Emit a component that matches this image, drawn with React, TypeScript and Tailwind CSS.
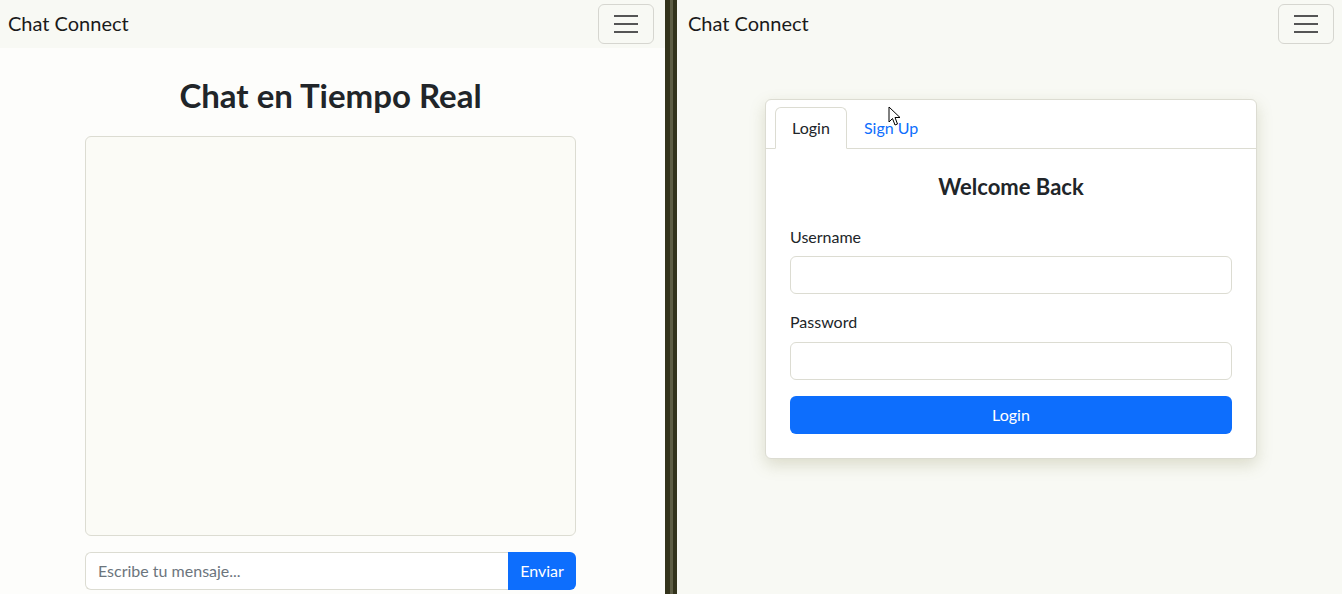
import { useState } from "react";

function Hamburger() {
  return (
    <button className="w-[56px] h-[40px] border border-[#d6d6d0] rounded-md flex flex-col items-center justify-center gap-[6px]">
      <span className="block w-[24px] h-[2px] bg-[#555]"></span>
      <span className="block w-[24px] h-[2px] bg-[#555]"></span>
      <span className="block w-[24px] h-[2px] bg-[#555]"></span>
    </button>
  );
}

function Navbar({ className }: { className: string }) {
  return (
    <nav className={`h-[48px] flex items-center justify-between bg-[#f8f9f4] ${className}`}>
      <span className="text-[20px] text-[#1a1a1a] leading-none -mt-[3px]">Chat Connect</span>
      <Hamburger />
    </nav>
  );
}

function ChatPane() {
  const [message, setMessage] = useState("");

  return (
    <div className="w-[665px] h-[594px] bg-[#fdfdfb] flex flex-col">
      <Navbar className="pl-[8px] pr-[11px]" />
      <div className="w-[491px] ml-[85px] flex flex-col">
        <h2 className="text-[33px] font-bold text-[#212529] text-center leading-[38px] mt-[28px] mb-[22px]">
          Chat en Tiempo Real
        </h2>
        <div className="h-[400px] border border-[#dcdcd2] rounded-md bg-[#fbfbf6]"></div>
        <div className="flex mt-[16px] h-[38px]">
          <input
            type="text"
            value={message}
            onChange={(e) => setMessage(e.target.value)}
            placeholder="Escribe tu mensaje..."
            className="flex-1 border border-[#dcdcd2] border-r-0 rounded-l-md px-[12px] text-[16px] text-[#212529] placeholder:text-[#6c757d] bg-white outline-none"
          />
          <button className="w-[68px] bg-[#0d6efd] text-white text-[16px] rounded-r-md">Enviar</button>
        </div>
      </div>
    </div>
  );
}

function LoginPane() {
  const [tab, setTab] = useState("login");

  return (
    <div className="relative w-[665px] h-[594px] bg-[#f8f9f4] flex flex-col">
      <Navbar className="pl-[11px] pr-[8px]" />
      <div className="w-[492px] ml-[88px] mt-[51px] bg-white border border-[#dcdcd2] rounded-md shadow-[0_6px_16px_rgba(120,120,60,0.22)]">
        <div className="flex pl-[9px] pt-[7px] border-b border-[#dcdcd2]">
          <button
            onClick={() => setTab("login")}
            className={`h-[42px] w-[72px] text-[16px] rounded-t-md -mb-px ${
              tab === "login"
                ? "border border-[#dcdcd2] border-b-white bg-white text-[#212529]"
                : "text-[#0d6efd]"
            }`}
          >
            Login
          </button>
          <button
            onClick={() => setTab("signup")}
            className={`h-[42px] px-[17px] text-[16px] rounded-t-md -mb-px ${
              tab === "signup"
                ? "border border-[#dcdcd2] border-b-white bg-white text-[#212529]"
                : "text-[#0d6efd]"
            }`}
          >
            Sign Up
          </button>
        </div>
        <div className="px-[24px] pt-[25px] pb-[24px]">
          <h4 className="text-[22px] font-bold text-[#212529] text-center leading-[26px] mb-[25px]">
            {tab === "login" ? "Welcome Back" : "Create Account"}
          </h4>
          <label className="block text-[16px] leading-[24px] text-[#212529] mb-[7px]">Username</label>
          <input type="text" className="block w-full h-[38px] border border-[#dcdcd2] rounded-md px-[12px] mb-[16px] outline-none" />
          <label className="block text-[16px] leading-[24px] text-[#212529] mb-[8px]">Password</label>
          <input type="password" className="block w-full h-[38px] border border-[#dcdcd2] rounded-md px-[12px] mb-[16px] outline-none" />
          <button className="w-full h-[38px] bg-[#0d6efd] text-white text-[16px] rounded-md">
            {tab === "login" ? "Login" : "Sign Up"}
          </button>
        </div>
      </div>
      {/* mouse pointer captured in the recording */}
      <svg className="absolute left-[211px] top-[106px]" width="13" height="21" viewBox="0 0 13 21">
        <path d="M1 1 L1 16 L4.5 12.5 L7 19 L9.5 18 L7 11.5 L12 11.5 Z" fill="white" stroke="black" strokeWidth="1" strokeLinejoin="round" />
      </svg>
    </div>
  );
}

export default function App() {
  return (
    <div className="w-[1342px] h-[594px] flex overflow-hidden font-['Lato',sans-serif]">
      <ChatPane />
      <div className="w-[12px] h-full bg-[#33331c] flex justify-center">
        <div className="w-[3px] h-full bg-[#5d5d44]"></div>
      </div>
      <LoginPane />
    </div>
  );
}
